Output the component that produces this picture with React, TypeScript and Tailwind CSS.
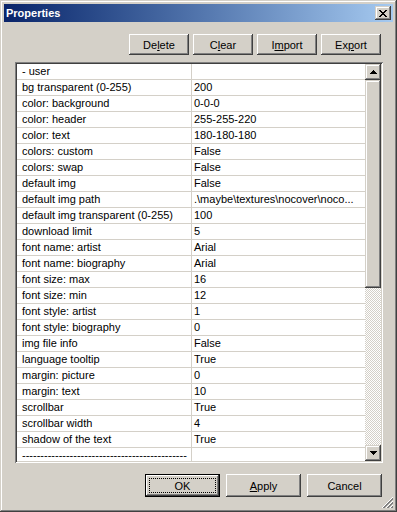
import React from "react";

const rows: [string, string][] = [
  ["- user", ""],
  ["bg transparent (0-255)", "200"],
  ["color: background", "0-0-0"],
  ["color: header", "255-255-220"],
  ["color: text", "180-180-180"],
  ["colors: custom", "False"],
  ["colors: swap", "False"],
  ["default img", "False"],
  ["default img path", ".\\maybe\\textures\\nocover\\noco..."],
  ["default img transparent (0-255)", "100"],
  ["download limit", "5"],
  ["font name: artist", "Arial"],
  ["font name: biography", "Arial"],
  ["font size: max", "16"],
  ["font size: min", "12"],
  ["font style: artist", "1"],
  ["font style: biography", "0"],
  ["img file info", "False"],
  ["language tooltip", "True"],
  ["margin: picture", "0"],
  ["margin: text", "10"],
  ["scrollbar", "True"],
  ["scrollbar width", "4"],
  ["shadow of the text", "True"],
  ["---------------------------------------------", ""],
];

const raisedBtn =
  "shadow-[inset_-1px_-1px_#404040,inset_1px_1px_#ffffff,inset_-2px_-2px_#808080,inset_2px_2px_#d4d0c8]";
const raisedBox =
  "shadow-[inset_-1px_-1px_#404040,inset_1px_1px_#d4d0c8,inset_-2px_-2px_#808080,inset_2px_2px_#ffffff]";

function Btn({ children, w, h }: { children: React.ReactNode; w: string; h: string }) {
  return (
    <div className={`${w} ${h} flex items-center justify-center bg-[#d4d0c8] text-black ${raisedBtn}`}>
      <span className="pt-px">{children}</span>
    </div>
  );
}

function Arrow({ down }: { down?: boolean }) {
  return (
    <svg width="7" height="4" viewBox="0 0 7 4" className={down ? "rotate-180" : ""} shapeRendering="crispEdges">
      <rect x="3" y="0" width="1" height="1" fill="#000" />
      <rect x="2" y="1" width="3" height="1" fill="#000" />
      <rect x="1" y="2" width="5" height="1" fill="#000" />
      <rect x="0" y="3" width="7" height="1" fill="#000" />
    </svg>
  );
}

function CloseX() {
  const px: [number, number, number][] = [
    [0, 0, 2], [6, 0, 2],
    [1, 1, 2], [5, 1, 2],
    [2, 2, 4],
    [3, 3, 2],
    [2, 4, 4],
    [1, 5, 2], [5, 5, 2],
    [0, 6, 2], [6, 6, 2],
  ];
  return (
    <svg width="8" height="7" viewBox="0 0 8 7" shapeRendering="crispEdges">
      {px.map(([x, y, w], i) => (
        <rect key={i} x={x} y={y} width={w} height="1" fill="#000" />
      ))}
    </svg>
  );
}

export default function App() {
  return (
    <div
      className={`relative h-[512px] w-[397px] bg-[#d4d0c8] p-[4px] text-[11px] leading-none ${raisedBox}`}
      style={{ fontFamily: '"Liberation Sans", Arial, sans-serif' }}
    >
      {/* title bar */}
      <div className="flex h-[18px] items-center justify-between bg-linear-to-r from-[#0a246a] to-[#a6caf0] pl-[2px] pr-[2px]">
        <span className="text-[11px] font-bold text-white">Properties</span>
        <div className={`flex h-[14px] w-[16px] items-center justify-center bg-[#d4d0c8] ${raisedBox}`}>
          <CloseX />
        </div>
      </div>

      {/* top buttons */}
      <div className="mt-[12px] flex justify-end gap-[4px] pr-[12px]">
        <Btn w="w-[60px]" h="h-[21px]">De<u>l</u>ete</Btn>
        <Btn w="w-[60px]" h="h-[21px]">C<u>l</u>ear</Btn>
        <Btn w="w-[60px]" h="h-[21px]">I<u>m</u>port</Btn>
        <Btn w="w-[60px]" h="h-[21px]">Ex<u>p</u>ort</Btn>
      </div>

      {/* property list */}
      <div className="ml-[11px] mt-[7px] flex h-[401px] w-[368px] bg-white p-[2px] shadow-[inset_1px_1px_#808080,inset_-1px_-1px_#ffffff,inset_2px_2px_#404040,inset_-2px_-2px_#d4d0c8]">
        <div className="w-[348px] overflow-hidden">
          {rows.map(([k, v], i) => (
            <div key={i} className="flex h-[16px] border-b border-[#d4d0c8] text-black">
              <div className="w-[175px] shrink-0 overflow-hidden whitespace-nowrap border-r border-[#d4d0c8] pl-[5px] pt-[2px]">
                {k}
              </div>
              <div className="flex-1 overflow-hidden whitespace-nowrap pl-[2px] pt-[2px]">{v}</div>
            </div>
          ))}
        </div>
        <div className="flex w-[16px] flex-col">
          <div className={`flex h-[16px] items-center justify-center bg-[#d4d0c8] ${raisedBox}`}>
            <Arrow />
          </div>
          <div className={`h-[208px] bg-[#d4d0c8] ${raisedBox}`} />
          <div className="flex-1 bg-[repeating-conic-gradient(#d4d0c8_0_25%,#ffffff_0_50%)] bg-[length:2px_2px]" />
          <div className={`flex h-[16px] items-center justify-center bg-[#d4d0c8] ${raisedBox}`}>
            <Arrow down />
          </div>
        </div>
      </div>

      {/* bottom buttons */}
      <div className="mt-[11px] flex justify-end gap-[6px] pr-[11px]">
        <div className="relative flex h-[23px] w-[75px] border border-black bg-[#d4d0c8]">
          <div className={`flex flex-1 items-center justify-center ${raisedBtn}`}>
            <span className="pt-px">OK</span>
          </div>
          <div className="pointer-events-none absolute inset-x-[3px] inset-y-[3px] border border-dotted border-black" />
        </div>
        <Btn w="w-[75px]" h="h-[23px]"><u>A</u>pply</Btn>
        <Btn w="w-[75px]" h="h-[23px]">Cancel</Btn>
      </div>

      {/* size grip */}
      <svg className="absolute bottom-[3px] right-[3px]" width="12" height="12" viewBox="0 0 12 12" shapeRendering="crispEdges">
        <path d="M11 0 L0 11 M11 4 L4 11 M11 8 L8 11" stroke="#ffffff" strokeWidth="1" />
        <path d="M11 1 L1 11 M11 2 L2 11 M11 5 L5 11 M11 6 L6 11 M11 9 L9 11 M11 10 L10 11" stroke="#808080" strokeWidth="1" />
      </svg>
    </div>
  );
}
